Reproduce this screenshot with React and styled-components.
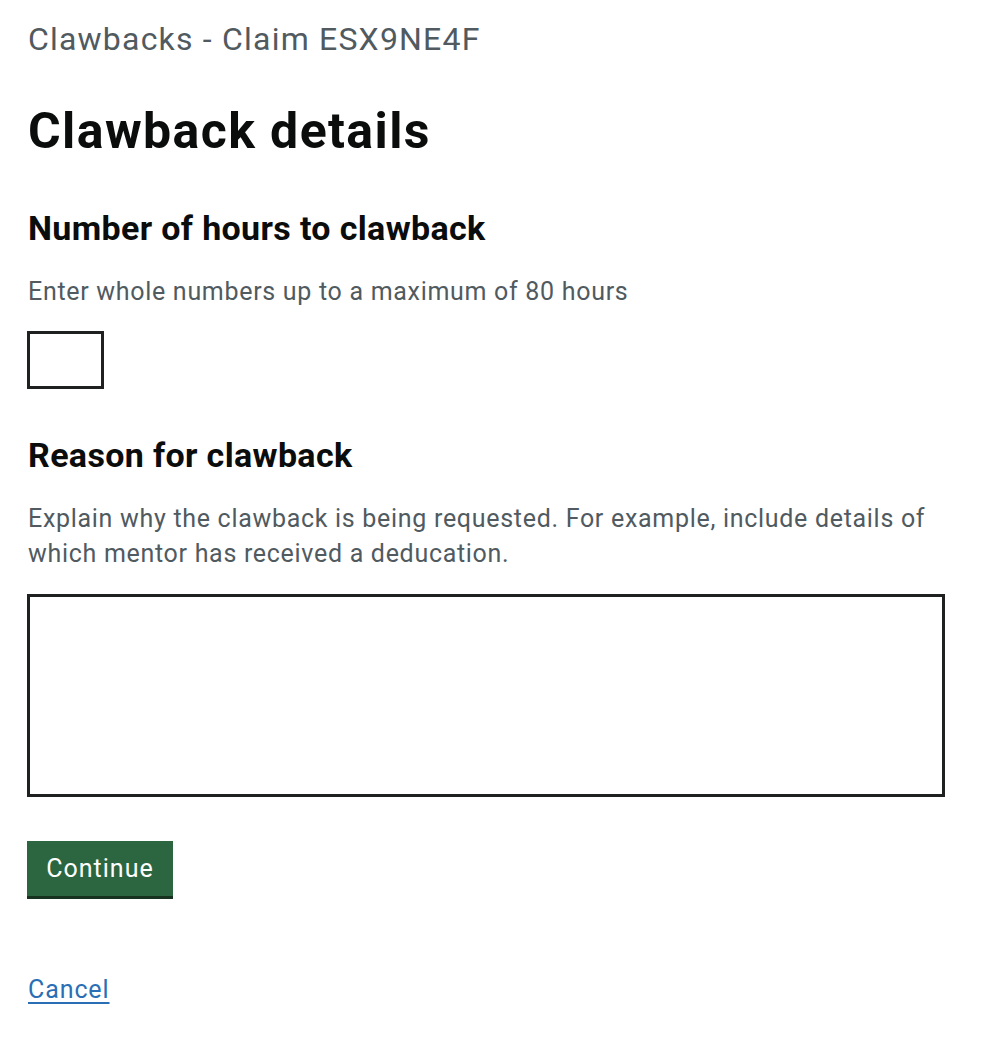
import React from "react";
import styled, { createGlobalStyle } from "styled-components";

const GlobalStyle = createGlobalStyle`
  body {
    margin: 0;
    background: #ffffff;
    font-family: Roboto, "Liberation Sans", Arial, sans-serif;
    color: #0b0c0c;
  }
`;

const Page = styled.main`
  padding: 19px 27px 40px 28px;
  display: flex;
  flex-direction: column;
  align-items: flex-start;
`;

const Caption = styled.span`
  font-size: 32px;
  line-height: 40px;
  letter-spacing: 1.2px;
  color: #505a5f;
`;

const Heading = styled.h1`
  margin: 42px 0 0;
  font-size: 50px;
  line-height: 60px;
  font-weight: 700;
  letter-spacing: 1.4px;
`;

const Label = styled.label`
  margin-top: ${({ $gap }) => $gap}px;
  font-size: 34px;
  line-height: 42px;
  font-weight: 700;
  letter-spacing: 0.35px;
`;

const Hint = styled.div`
  margin-top: 25px;
  font-size: 25px;
  line-height: 35px;
  letter-spacing: 0.7px;
  color: #505a5f;
  max-width: 918px;
`;

const Input = styled.input`
  box-sizing: border-box;
  margin: 22px 0 0 -1px;
  width: 77px;
  height: 58px;
  border: 3px solid #1f2020;
  border-radius: 0;
  font: inherit;
`;

const TextArea = styled.textarea`
  box-sizing: border-box;
  display: block;
  margin: 23px 0 0 -1px;
  width: 918px;
  height: 203px;
  border: 3px solid #1f2020;
  border-radius: 0;
  resize: none;
  font: inherit;
`;

const Button = styled.button`
  margin: 44px 0 0 -1px;
  width: 146px;
  height: 55px;
  border: 0;
  border-radius: 0;
  background: #2c6640;
  box-shadow: 0 3px 0 #17331f;
  color: #ffffff;
  font-family: inherit;
  font-size: 25px;
  letter-spacing: 1px;
  padding: 0;
  cursor: pointer;
`;

const CancelLink = styled.a`
  margin-top: 76px;
  font-size: 25px;
  line-height: 35px;
  letter-spacing: 0.9px;
  color: #2a6fb5;
  text-decoration: underline;
  text-underline-offset: 4px;
`;

export default function App() {
  return (
    <>
      <GlobalStyle />
      <Page>
        <Caption>Clawbacks - Claim ESX9NE4F</Caption>
        <Heading>Clawback details</Heading>

        <Label htmlFor="hours" $gap={46}>Number of hours to clawback</Label>
        <Hint>Enter whole numbers up to a maximum of 80 hours</Hint>
        <Input id="hours" type="text" />

        <Label htmlFor="reason" $gap={45}>Reason for clawback</Label>
        <Hint>
          Explain why the clawback is being requested. For example, include details of
          which mentor has received a deducation.
        </Hint>
        <TextArea id="reason" />

        <Button type="button">Continue</Button>
        <CancelLink href="#">Cancel</CancelLink>
      </Page>
    </>
  );
}
